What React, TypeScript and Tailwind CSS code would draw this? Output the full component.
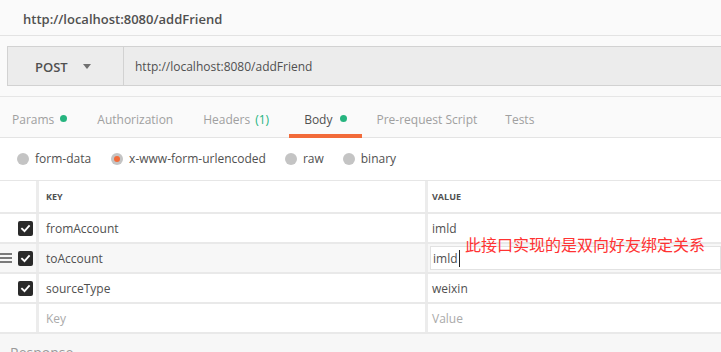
import React from "react";

const font = { fontFamily: '"Open Sans", "Noto Sans", sans-serif' };

function Check() {
  return (
    <div className="w-[15px] h-[15px] rounded-[2px] bg-[#2a2a2a] flex items-center justify-center">
      <svg width="11" height="11" viewBox="0 0 12 12">
        <path d="M2.2 6.2 L4.9 8.8 L9.8 3.4" stroke="#fff" strokeWidth="2" fill="none" strokeLinecap="square" />
      </svg>
    </div>
  );
}

function Radio({ on }: { on?: boolean }) {
  return (
    <div className="w-[12px] h-[12px] rounded-full bg-[#c4c4c4] flex items-center justify-center">
      {on && <div className="w-[6px] h-[6px] rounded-full bg-[#f26b3a]" />}
    </div>
  );
}

function Row({
  k,
  v,
  checked,
  hover,
  placeholder,
}: {
  k: string;
  v: string;
  checked?: boolean;
  hover?: boolean;
  placeholder?: boolean;
}) {
  return (
    <div className={`flex h-[30px] border-b-2 border-[#e9e9e9] ${hover ? "bg-[#f7f7f7]" : "bg-white"}`}>
      <div className="w-[39px] shrink-0 border-r-[3px] border-[#ececec] flex items-center justify-end pr-[3px] relative">
        {hover && (
          <div className="absolute left-0 top-[9px] flex flex-col gap-[2px]">
            <div className="w-[12px] h-[2px] bg-[#7a7a7a]" />
            <div className="w-[12px] h-[2px] bg-[#7a7a7a]" />
            <div className="w-[12px] h-[2px] bg-[#7a7a7a]" />
          </div>
        )}
        {checked && <Check />}
      </div>
      <div
        className={`w-[389px] shrink-0 border-r-[3px] border-[#ececec] flex items-center pl-[7px] pt-[1px] text-[12px] ${
          placeholder ? "text-[#aaaaaa]" : "text-[#505050]"
        }`}
      >
        {k}
      </div>
      <div className="flex-1 flex items-center pl-[2px] text-[12px]">
        {hover ? (
          <div className="h-[24px] w-full border border-[#e2e2e2] bg-white flex items-center pl-[2px] pt-[1px] text-[#505050]">
            {v}
            <span className="inline-block w-[1px] h-[17px] bg-[#222] ml-[1px]" />
          </div>
        ) : (
          <span className={`pl-[2px] pt-[1px] ${placeholder ? "text-[#aaaaaa]" : "text-[#505050]"}`}>{v}</span>
        )}
      </div>
    </div>
  );
}

export default function App() {
  return (
    <div className="w-[721px] h-[352px] overflow-hidden bg-[#fafafa] relative" style={font}>
      {/* title */}
      <div className="h-[36px] border-b border-[#e3e3e3] flex items-center pl-[23px] pt-[5px] text-[13px] font-semibold text-[#505050]">
        http://localhost:8080/addFriend
      </div>
      {/* url bar */}
      <div className="pt-[10px] pb-[10px] pl-[7px] border-b border-[#e6e6e6]">
        <div className="h-[40px] flex bg-[#ececec] border border-[#d2d2d2] border-r-0">
          <div className="w-[116px] shrink-0 border-r border-[#d2d2d2] flex items-center pl-[27px] text-[13px] font-semibold text-[#505050]">
            <span className="pt-[4px]">POST</span>
            <svg width="8" height="5" viewBox="0 0 8 5" className="ml-[15px]">
              <path d="M0 0 L8 0 L4 5 Z" fill="#707070" />
            </svg>
          </div>
          <div className="flex items-center pl-[11px] pt-[2px] text-[12px] text-[#505050]">http://localhost:8080/addFriend</div>
        </div>
      </div>
      {/* tabs */}
      <div className="h-[41px] border-b border-[#e4e4e4] flex text-[12px] text-[#a0a0a0]">
        <div className="flex items-center pl-[12px] pr-[15px] pt-[5px]">
          Params <span className="ml-[6px] mb-[3px] w-[7px] h-[7px] rounded-full bg-[#26b47f]" />
        </div>
        <div className="flex items-center px-[15px] pt-[5px]">Authorization</div>
        <div className="flex items-center px-[15px] pt-[5px]">
          Headers <span className="ml-[5px] text-[#26b47f]">(1)</span>
        </div>
        <div className="flex items-center ml-[5px] px-[15px] pt-[5px] relative text-[#505050]">
          Body <span className="ml-[8px] mb-[3px] w-[7px] h-[7px] rounded-full bg-[#26b47f]" />
          <div className="absolute left-0 right-0 bottom-[-1px] h-[4px] bg-[#f26b3a]" />
        </div>
        <div className="flex items-center pl-[14px] pr-[14px] pt-[5px]">Pre-request Script</div>
        <div className="flex items-center px-[14px] pt-[5px]">Tests</div>
      </div>
      {/* radios */}
      <div className="h-[43px] bg-white border-b border-[#e6e6e6] flex items-center pl-[17px] pb-[1px] text-[12px] text-[#505050]">
        <div className="flex items-center">
          <Radio />
          <span className="ml-[6px]">form-data</span>
        </div>
        <div className="flex items-center ml-[20px]">
          <Radio on />
          <span className="ml-[6px]">x-www-form-urlencoded</span>
        </div>
        <div className="flex items-center ml-[19px]">
          <Radio />
          <span className="ml-[6px]">raw</span>
        </div>
        <div className="flex items-center ml-[19px]">
          <Radio />
          <span className="ml-[6px]">binary</span>
        </div>
      </div>
      {/* table */}
      <div className="bg-white">
        <div className="flex h-[33px] border-b-2 border-[#e9e9e9]">
          <div className="w-[39px] shrink-0 border-r-[3px] border-[#ececec]" />
          <div className="w-[389px] shrink-0 border-r-[3px] border-[#ececec] flex items-center pl-[7px] pt-[1px] text-[9px] font-bold text-[#505050]">
            KEY
          </div>
          <div className="flex-1 flex items-center pl-[4px] pt-[1px] text-[9px] font-bold text-[#505050]">VALUE</div>
        </div>
        <Row k="fromAccount" v="imld" checked />
        <Row k="toAccount" v="imld" checked hover />
        <Row k="sourceType" v="weixin" checked />
        <Row k="Key" v="Value" placeholder />
      </div>
      {/* response */}
      <div className="h-[30px] bg-[#f7f7f7] pl-[10px] pt-[9px] text-[14px] leading-[20px] text-[#9a9a9a]">Response</div>
      {/* annotation */}
      <div
        className="absolute left-[465px] top-[236px] text-[16px] leading-[16px] text-[#ff3333] whitespace-nowrap"
        style={{ fontFamily: '"Noto Sans CJK SC", sans-serif' }}
      >
        此接口实现的是双向好友绑定关系
      </div>
    </div>
  );
}
